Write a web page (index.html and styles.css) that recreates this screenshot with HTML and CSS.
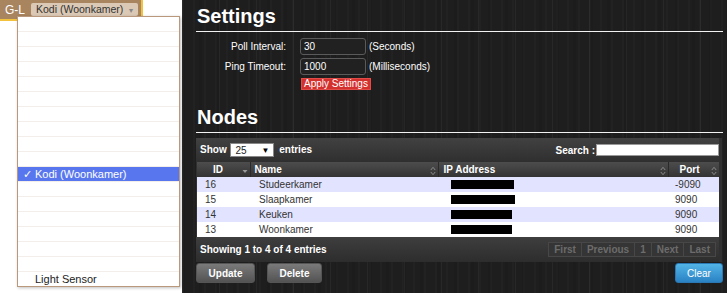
FILE: index.html
```html
<!DOCTYPE html>
<html lang="nl">
  <head>
    <meta charset="UTF-8" />
    <title>Settings</title>
    <link rel="stylesheet" href="styles.css">
  </head>
  <body>
    <div class="sidebar">
      <div class="topbar">
        <span class="site">G-L</span>
        <span class="picker">Kodi (Woonkamer) <span class="caret">▾</span></span>
      </div>
      <!-- open device menu -->
      <ul class="menu">
        <li></li><li></li><li></li><li></li><li></li>
        <li></li><li></li><li></li><li></li><li></li>
        <li class="selected"><span class="check">✓</span>Kodi (Woonkamer)</li>
        <li></li><li></li><li></li><li></li><li></li><li></li>
        <li>Light Sensor</li>
      </ul>
    </div>

    <div class="main">
      <h1>Settings</h1>
      <div class="settings">
        <label>Poll Interval:</label>
        <input class="field" value="30">
        <span class="unit">(Seconds)</span>
        <label>Ping Timeout:</label>
        <input class="field" value="1000">
        <span class="unit">(Milliseconds)</span>
        <span></span>
        <button class="apply">Apply Settings</button>
      </div>

      <h1 class="nodes-title">Nodes</h1>
      <div class="grid-wrap">
        <div class="toolbar">
          <div class="length">Show <span class="fake-select">25 <span class="arrow">▼</span></span> entries</div>
          <div class="search">Search : <input class="search-box"></div>
        </div>
        <table class="nodes">
          <thead>
            <tr>
              <th class="c-id">ID<span class="sort"><svg width="6" height="10" viewBox="0 0 6 10"><path d="M0.5 4 L5.5 4 L3 7 Z" fill="#9a9a9a"/></svg></span></th>
              <th class="c-name">Name<span class="sort"><svg width="6" height="10" viewBox="0 0 6 10"><path d="M0.8 4 L3 1.3 L5.2 4 M0.8 6 L3 8.7 L5.2 6" fill="none" stroke="#8a8a8a" stroke-width="1"/></svg></span></th>
              <th class="c-ip">IP Address<span class="sort"><svg width="6" height="10" viewBox="0 0 6 10"><path d="M0.8 4 L3 1.3 L5.2 4 M0.8 6 L3 8.7 L5.2 6" fill="none" stroke="#8a8a8a" stroke-width="1"/></svg></span></th>
              <th class="c-port">Port<span class="sort"><svg width="6" height="10" viewBox="0 0 6 10"><path d="M0.8 4 L3 1.3 L5.2 4 M0.8 6 L3 8.7 L5.2 6" fill="none" stroke="#8a8a8a" stroke-width="1"/></svg></span></th>
            </tr>
          </thead>
          <tbody>
            <tr class="odd"><td class="c-id">16</td><td class="c-name">Studeerkamer</td><td class="c-ip"><span class="hidden-ip" style="width:63px"></span></td><td class="c-port">-9090</td></tr>
            <tr><td class="c-id">15</td><td class="c-name">Slaapkamer</td><td class="c-ip"><span class="hidden-ip" style="width:64px"></span></td><td class="c-port">9090</td></tr>
            <tr class="odd"><td class="c-id">14</td><td class="c-name">Keuken</td><td class="c-ip"><span class="hidden-ip" style="width:61px"></span></td><td class="c-port">9090</td></tr>
            <tr><td class="c-id">13</td><td class="c-name">Woonkamer</td><td class="c-ip"><span class="hidden-ip" style="width:61px"></span></td><td class="c-port">9090</td></tr>
          </tbody>
        </table>
        <div class="grid-footer">
          <div class="info">Showing 1 to 4 of 4 entries</div>
          <div class="paging">
            <span>First</span><span>Previous</span><span>1</span><span>Next</span><span>Last</span>
          </div>
        </div>
      </div>

      <div class="actions">
        <button class="btn">Update</button>
        <button class="btn delete">Delete</button>
        <button class="btn clear">Clear</button>
      </div>
    </div>
  </body>
</html>
```

FILE: styles.css
```css
body {
  font-family: 'Liberation Sans', Arial, sans-serif;
  margin: 0;
  padding: 0;
  display: flex;
  width: 727px;
  height: 293px;
  overflow: hidden;
  background-color: white;
}

/* left side: device picker */
.sidebar {
  flex: none;
  width: 182px;
  position: relative;
  background-color: white;
}

.topbar {
  width: 141px;
  height: 19px;
  background-color: #a8845f;
  border-right: 2px solid #f2c23e;
  border-bottom: 2px solid #f2c23e;
  display: flex;
  align-items: center;
}

.site {
  color: white;
  font-size: 12px;
  margin-left: 5px;
  margin-right: 6px;
}

.picker {
  background-color: #dbc9b5;
  color: #333;
  font-size: 10.5px;
  height: 13px;
  line-height: 13px;
  padding: 0 4px 0 5px;
  border-radius: 2px;
  width: 98px;
  white-space: nowrap;
}

.caret {
  color: #888;
  font-size: 8px;
  margin-left: 3px;
}

.menu {
  position: absolute;
  top: 16px;
  left: 17px;
  width: 161px;
  margin: 0;
  padding: 0;
  list-style: none;
  background-color: white;
  border: 1px solid #b9987b;
  box-shadow: 1px 1px 3px rgba(0, 0, 0, 0.25);
}

.menu li {
  height: 14px;
  line-height: 14px;
  border-bottom: 1px solid #f3eee9;
  font-size: 11px;
  color: #222;
  padding-left: 17px;
}

.menu li:last-child {
  border-bottom: none;
}

.menu li.selected {
  background-color: #5877ee;
  color: white;
  padding-left: 5px;
}

.check {
  display: inline-block;
  width: 12px;
}

/* right side: settings page */
.main {
  flex: 1;
  min-width: 0;
  padding: 0 4px 0 14px;
  background-color: #1e1e1e;
  background-image:
    repeating-linear-gradient(90deg, rgba(255, 255, 255, 0.045) 0 1px, transparent 1px 37px),
    repeating-linear-gradient(90deg, rgba(255, 255, 255, 0.02) 0 2px, transparent 2px 11px),
    repeating-linear-gradient(90deg, rgba(0, 0, 0, 0.08) 0 3px, transparent 3px 17px);
  color: white;
  font-size: 10px;
}

.main h1 {
  font-size: 20px;
  line-height: 24px;
  margin: 4px 0 0 0;
  padding: 0 0 3px 1px;
  border-bottom: 1px solid #f2f2f2;
  color: white;
}

.settings {
  display: grid;
  grid-template-columns: 90px 66px auto;
  column-gap: 14px;
  row-gap: 3px;
  align-items: center;
  margin-top: 6px;
}

.settings label {
  text-align: right;
}

.settings .unit {
  margin-left: -11px;
}

.field {
  box-sizing: border-box;
  width: 66px;
  height: 17px;
  background-color: #212121;
  border: 1px solid #5a5a5a;
  border-radius: 3px;
  color: white;
  font-family: inherit;
  font-size: 10px;
  padding: 0 3px;
}

.apply {
  justify-self: start;
  white-space: nowrap;
  margin-left: 1px;
  height: 12px;
  padding: 0 2px;
  background-color: #d4302d;
  border: 1px solid #e24c48;
  color: white;
  font-family: inherit;
  font-size: 10px;
  line-height: 10px;
}

.main h1.nodes-title {
  margin-top: 15px;
}

.grid-wrap {
  margin: 5px 1px 0 0;
  padding: 0 3px 0 1px;
  background-color: #303030;
}

.toolbar {
  height: 24px;
  display: flex;
  justify-content: space-between;
  align-items: center;
  padding: 0 0 0 4px;
  background: linear-gradient(#414141, #2f2f2f);
  font-weight: bold;
  margin-left: -1px;
}

.fake-select {
  display: inline-flex;
  justify-content: space-between;
  align-items: center;
  box-sizing: border-box;
  width: 44px;
  height: 14px;
  margin: 0 2px 0 1px;
  padding: 0 4px;
  background-color: white;
  border: 1px solid #888;
  color: #222;
  font-weight: normal;
  vertical-align: middle;
}

.fake-select .arrow {
  font-size: 8px;
  color: black;
}

.search {
  display: flex;
  align-items: center;
}

.search-box {
  box-sizing: border-box;
  width: 123px;
  height: 12px;
  margin-left: 1px;
  border: 1px solid #999;
  padding: 0;
}

.nodes {
  width: 522px;
  border-collapse: collapse;
  table-layout: fixed;
}

.nodes th,
.nodes td {
  box-sizing: border-box;
}

.nodes th {
  height: 15px;
  padding: 0;
  text-align: left;
  font-size: 10px;
  color: white;
  background: linear-gradient(#4d4d4d, #333);
  border-right: 1px solid #2a2a2a;
}

.nodes th:last-child {
  border-right: none;
}

.sort {
  float: right;
  margin-right: 2px;
  height: 10px;
  margin-top: 2px;
}

.nodes td {
  height: 15px;
  padding: 0;
  font-size: 10px;
  color: #333;
  background-color: white;
}

.nodes tr.odd td {
  background-color: #e2e4ff;
}

.c-id { width: 53px; }
.c-name { width: 188px; }
.c-ip { width: 230px; }
.c-port { width: 51px; }

th.c-id { padding-left: 16px; }
th.c-name { padding-left: 4px; }
th.c-ip { padding-left: 5px; }
th.c-port { padding-left: 11px; }

td.c-id { padding-left: 8px; }
td.c-name { padding-left: 9px; }
td.c-ip { padding-left: 13px; }
td.c-port { padding-left: 7px; }

.hidden-ip {
  display: block;
  height: 9px;
  background-color: black;
}

.grid-footer {
  height: 25px;
  display: flex;
  justify-content: space-between;
  align-items: center;
  padding-left: 4px;
  margin-left: -1px;
  background: linear-gradient(#3e3e3e, #2d2d2d);
  font-weight: bold;
}

.paging {
  display: flex;
  margin-right: 3px;
}

.paging span {
  height: 13px;
  line-height: 13px;
  padding: 0 5px;
  border: 1px solid #474747;
  margin-left: -1px;
  color: #6c6c6c;
  background-color: #353535;
}

.actions {
  display: flex;
  gap: 12px;
  margin-top: 1px;
}

.btn {
  height: 20px;
  padding: 0;
  border: 1px solid #555;
  border-radius: 3px;
  background: linear-gradient(#7a7a7a, #535353);
  color: white;
  font-family: inherit;
  font-size: 10px;
  font-weight: bold;
  width: 59px;
}

.btn.delete {
  width: 55px;
}

.btn.clear {
  margin-left: auto;
  width: 48px;
  border-color: #2a78b4;
  background: linear-gradient(#52b4e6, #2a82c4);
  font-weight: normal;
}
```
